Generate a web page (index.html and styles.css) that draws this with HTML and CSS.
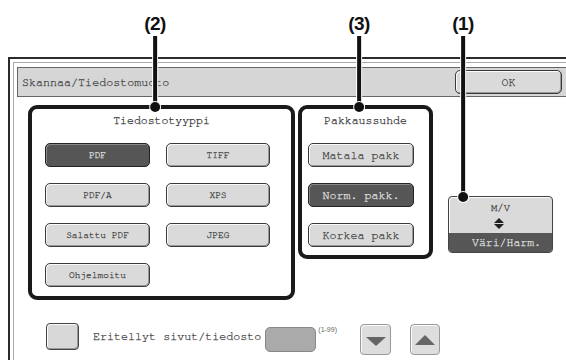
FILE: index.html
```html
<!DOCTYPE html>
<html>
  <head>
    <title>Skannaa/Tiedostomuoto</title>
    <link rel="stylesheet" href="styles.css">
  </head>
  <body>
    <div class="callouts">
      <div class="callout callout-2">
        <span class="callout-num">(2)</span>
        <span class="callout-line"></span>
        <span class="callout-dot"></span>
      </div>
      <div class="callout callout-3">
        <span class="callout-num">(3)</span>
        <span class="callout-line"></span>
        <span class="callout-dot"></span>
      </div>
      <div class="callout callout-1">
        <span class="callout-num">(1)</span>
        <span class="callout-line"></span>
        <span class="callout-dot"></span>
      </div>
    </div>

    <div class="window">
      <div class="window-inner">
        <div class="titlebar">
          <span class="title">Skannaa/Tiedostomuoto</span>
          <button class="btn btn-ok">OK</button>
        </div>

        <div class="content">
          <div class="panel panel-files">
            <div class="panel-title">Tiedostotyyppi</div>
            <div class="file-grid">
              <button class="btn btn-small selected">PDF</button>
              <button class="btn btn-small">TIFF</button>
              <button class="btn btn-small">PDF/A</button>
              <button class="btn btn-small">XPS</button>
              <button class="btn btn-small">Salattu PDF</button>
              <button class="btn btn-small">JPEG</button>
              <button class="btn btn-small">Ohjelmoitu</button>
            </div>
          </div>

          <div class="panel panel-ratio">
            <div class="panel-title">Pakkaussuhde</div>
            <div class="ratio-list">
              <button class="btn btn-ratio">Matala pakk</button>
              <button class="btn btn-ratio selected">Norm. pakk.</button>
              <button class="btn btn-ratio">Korkea pakk</button>
            </div>
          </div>

          <div class="mode-btn">
            <div class="mode-label">M/V</div>
            <svg class="mode-arrows" width="10" height="11" viewBox="0 0 10 11">
              <polygon points="5,0 10,5 0,5" fill="#222"/>
              <polygon points="0,6 10,6 5,11" fill="#222"/>
            </svg>
            <div class="mode-value">Väri/Harm.</div>
          </div>
        </div>

        <div class="bottom-row">
          <div class="checkbox"></div>
          <span class="check-label">Eritellyt sivut/tiedosto</span>
          <div class="num-input"></div>
          <span class="range">(1-99)</span>
          <button class="arrow-btn arrow-down">
            <svg width="20" height="9" viewBox="0 0 20 9"><polygon points="0,0 20,0 10,9" fill="#666"/></svg>
          </button>
          <button class="arrow-btn arrow-up">
            <svg width="20" height="10" viewBox="0 0 20 10"><polygon points="10,0 20,10 0,10" fill="#666"/></svg>
          </button>
        </div>
      </div>
    </div>
  </body>
</html>
```

FILE: styles.css
```css
body {
  margin: 0;
  width: 566px;
  height: 360px;
  overflow: hidden;
  background-color: #fff;
  font-family: "Nimbus Mono PS", "FreeMono", "Courier New", "Liberation Mono", monospace;
  color: #444;
  -webkit-text-stroke: 0.25px currentColor;
}

/* callout labels above the screen */
.callouts {
  position: absolute;
  top: 0;
  left: 0;
  z-index: 5;
}

.callout {
  position: absolute;
  top: 14px;
  display: flex;
  flex-direction: column;
  align-items: center;
  transform: translateX(-50%);
}

.callout-2 { left: 155px; }
.callout-3 { left: 359px; }
.callout-1 { left: 463px; }

.callout-num {
  font-family: "Liberation Sans", Arial, sans-serif;
  font-weight: bold;
  font-size: 19px;
  line-height: 20px;
  color: #111;
  letter-spacing: -0.5px;
  -webkit-text-stroke: 0;
}

.callout-line {
  display: block;
  width: 4px;
  margin-top: 2px;
  background-color: #111;
  box-shadow: 0 0 0 1px #fff;
}

.callout-2 .callout-line,
.callout-3 .callout-line {
  height: 68px;
}

.callout-1 .callout-line {
  height: 158px;
}

.callout-dot {
  display: block;
  width: 10px;
  height: 10px;
  margin-top: -2px;
  border-radius: 50%;
  background-color: #111;
  box-shadow: 0 0 0 1px #fff;
}

/* screen frame */
.window {
  margin: 57px 0 0 8px;
  width: 558px;
  height: 303px;
  box-sizing: border-box;
  border-top: 2px solid #2a2a2a;
  border-left: 2px solid #2a2a2a;
  padding: 3px 0 0 3px;
}

.window-inner {
  height: 100%;
  box-sizing: border-box;
  border-top: 1px solid #aaa;
  border-left: 1px solid #aaa;
  padding: 4px 0 0 3px;
}

.titlebar {
  display: flex;
  align-items: center;
  height: 30px;
  box-sizing: border-box;
  border: 1px solid #666;
  border-right: none;
  background-color: #d6d6d6;
  padding-left: 4px;
}

.title {
  font-size: 11.7px;
}

.btn {
  font-family: inherit;
  color: #444;
  height: 24px;
  box-sizing: border-box;
  border: 1px solid #3a3a3a;
  border-radius: 5px;
  background-color: #dadada;
  box-shadow: inset 1px 1px 0 #fafafa, inset -1px -1px 0 #999;
  padding: 0;
}

.btn-ok {
  margin-left: auto;
  margin-right: 4px;
  width: 107px;
  font-size: 11.5px;
}

.content {
  display: flex;
  align-items: flex-start;
  margin-top: 8px;
}

.panel {
  box-sizing: border-box;
  border: 4px solid #1a1a1a;
  border-radius: 9px;
  background-color: #fff;
}

.panel-files {
  width: 267px;
  height: 195px;
  margin-left: 11px;
}

.panel-ratio {
  width: 135px;
  height: 154px;
  margin-left: 3px;
}

.panel-title {
  text-align: center;
  font-size: 11.5px;
  line-height: 16px;
  margin: 4px 0 14px;
  color: #333;
}

.file-grid {
  display: grid;
  grid-template-columns: 105px 104px;
  gap: 16px;
  padding-left: 13px;
}

.btn-small {
  font-size: 9.5px;
}

.ratio-list {
  display: flex;
  flex-direction: column;
  gap: 16px;
  padding-left: 6px;
}

.btn-ratio {
  width: 106px;
  font-size: 11.7px;
}

.btn.selected {
  background-color: #565656;
  color: #e0e0e0;
  border-color: #222;
  box-shadow: inset 1px 1px 0 #888;
}

.mode-btn {
  margin: 91px 0 0 15px;
  width: 105px;
  height: 57px;
  box-sizing: border-box;
  border: 1px solid #444;
  border-radius: 4px;
  background-color: #dadada;
  box-shadow: inset 1px 1px 0 #fafafa;
  display: flex;
  flex-direction: column;
  align-items: center;
  overflow: hidden;
}

.mode-label {
  font-size: 10.5px;
  line-height: 12px;
  margin-top: 5px;
}

.mode-arrows {
  margin: 4px 0 0 -4px;
}

.mode-value {
  margin-top: auto;
  align-self: stretch;
  height: 19px;
  line-height: 19px;
  background-color: #565656;
  color: #e0e0e0;
  font-size: 11.5px;
  text-align: right;
  padding-right: 11px;
}

/* bottom row */
.bottom-row {
  display: flex;
  align-items: flex-start;
  margin: 23px 0 0 29px;
}

.checkbox {
  width: 33px;
  height: 27px;
  box-sizing: border-box;
  border: 1px solid #444;
  border-radius: 4px;
  background-color: #d8d8d8;
  box-shadow: inset 1px 1px 0 #fafafa, inset -1px -1px 0 #999;
}

.check-label {
  margin-left: 14px;
  font-size: 11.7px;
  line-height: 27px;
}

.num-input {
  margin: 4px 0 0 4px;
  width: 51px;
  height: 25px;
  box-sizing: border-box;
  border: 1px solid #888;
  border-radius: 5px;
  background-color: #aaa;
}

.range {
  margin: 3px 0 0 2px;
  font-family: "Liberation Sans", Arial, sans-serif;
  font-size: 7px;
  line-height: 8px;
  color: #666;
  -webkit-text-stroke: 0;
}

.arrow-btn {
  margin-top: 1px;
  width: 31px;
  height: 31px;
  box-sizing: border-box;
  border: 1px solid #999;
  border-radius: 4px;
  background-color: #ddd;
  box-shadow: inset 1px 1px 0 #fafafa;
  padding: 0;
  display: flex;
  align-items: center;
  justify-content: center;
}

.arrow-down {
  margin-left: 23px;
}

.arrow-down svg {
  margin-top: 4px;
}

.arrow-up {
  margin-left: 19px;
  width: 30px;
}
```
